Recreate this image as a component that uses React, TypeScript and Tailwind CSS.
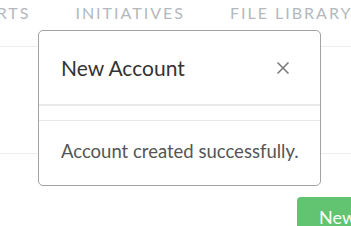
const navItems = ["REPORTS", "INITIATIVES", "FILE LIBRARY"];

const App = () => {
  return (
    <div className="relative w-[351px] h-[226px] overflow-hidden bg-white font-['Lato',sans-serif]">
      {/* top nav */}
      <div className="flex items-center h-[26px] gap-[45px] -ml-[53px] whitespace-nowrap">
        {navItems.map((item) => (
          <span
            key={item}
            className="text-[16px] leading-none tracking-[2px] text-[#b4b8bc]"
          >
            {item}
          </span>
        ))}
      </div>

      {/* page rows */}
      <div className="mt-[20px] border-t border-[#ececec]" />
      <div className="mt-[106px] border-t border-[#ececec]" />

      <div className="flex justify-end mt-[43px]">
        <button className="w-[54px] h-[32px] rounded-tl-[4px] bg-[#62c370] text-white text-[18px] pl-[22px] pt-[7px] text-left whitespace-nowrap overflow-hidden">
          New Account
        </button>
      </div>

      {/* modal */}
      <div className="absolute left-[38px] top-[30px] w-[283px] h-[156px] bg-white border border-[#a3a3a3] rounded-[5px] flex flex-col">
        <div className="flex items-center justify-between h-[75px] pl-[22px] pr-[31px] border-b-2 border-[#e9e9e9]">
          <span className="text-[21px] text-[#333]">New Account</span>
          <svg width="12" height="12" viewBox="0 0 12 12" className="text-[#777]">
            <path d="M0.5 0.5 L11.5 11.5 M11.5 0.5 L0.5 11.5" stroke="currentColor" strokeWidth="1.5" fill="none" />
          </svg>
        </div>
        <div className="h-[15px] border-b border-[#e9e9e9]" />
        <div className="pl-[22px] pt-[17px] text-[18.5px] leading-[26px] text-[#555] whitespace-nowrap">
          Account created successfully.
        </div>
      </div>
    </div>
  );
};

export default App;
